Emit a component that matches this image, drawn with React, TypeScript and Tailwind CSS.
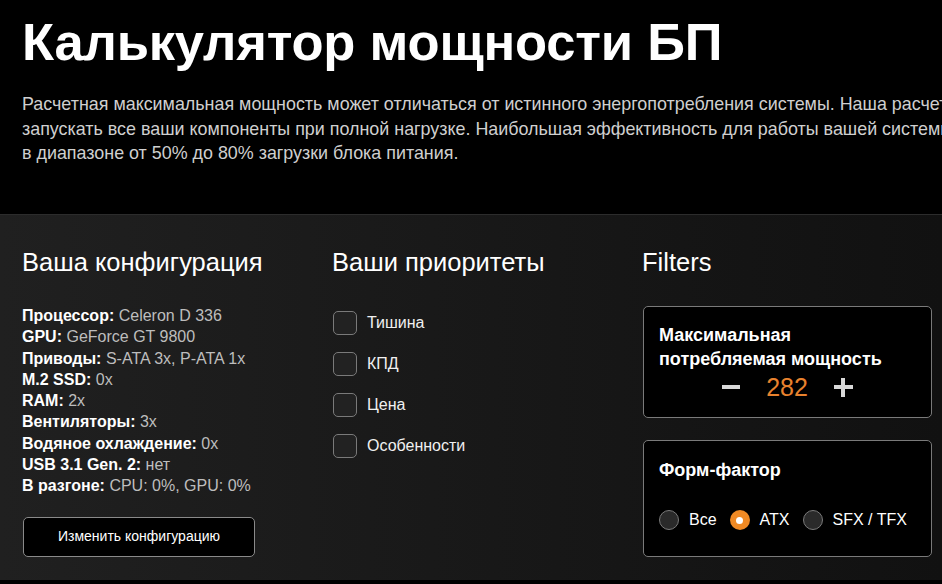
import { useState } from "react";

const config: [string, string][] = [
  ["Процессор:", "Celeron D 336"],
  ["GPU:", "GeForce GT 9800"],
  ["Приводы:", "S-ATA 3x, P-ATA 1x"],
  ["M.2 SSD:", "0x"],
  ["RAM:", "2x"],
  ["Вентиляторы:", "3x"],
  ["Водяное охлаждение:", "0x"],
  ["USB 3.1 Gen. 2:", "нет"],
  ["В разгоне:", "CPU: 0%, GPU: 0%"],
];

const priorities = ["Тишина", "КПД", "Цена", "Особенности"];
const forms = ["Все", "ATX", "SFX / TFX"];

export default function App() {
  const [watts, setWatts] = useState(282);
  const [form, setForm] = useState("ATX");
  const [checked, setChecked] = useState<string[]>([]);

  function toggle(p: string) {
    setChecked((c) => (c.includes(p) ? c.filter((x) => x !== p) : [...c, p]));
  }

  return (
    <div className="w-[942px] h-[584px] overflow-hidden bg-black text-white font-['Liberation_Sans',Arial,sans-serif]">
      <header className="h-[214px] px-[22px] pt-[12px] overflow-hidden">
        <h1 className="text-[52.5px] font-bold leading-[60px] tracking-[-0.2px] whitespace-nowrap">
          Калькулятор мощности БП
        </h1>
        <p className="mt-[20px] text-[17.9px] leading-[24.5px] text-[#cfcfcf] whitespace-nowrap">
          Расчетная максимальная мощность может отличаться от истинного энергопотребления системы. Наша расчетная мощность позволит
          <br />
          запускать все ваши компоненты при полной нагрузке. Наибольшая эффективность для работы вашей системы достигается
          <br />
          в диапазоне от 50% до 80% загрузки блока питания.
        </p>
      </header>

      <section className="h-[366px] border-t border-[#2c2c2c] bg-gradient-to-r from-[#202020] to-[#111111] flex pl-[22px] pt-[31px]">
        <div className="w-[310px] shrink-0">
          <h2 className="text-[25.5px] leading-[32px] whitespace-nowrap">Ваша конфигурация</h2>
          <ul className="mt-[27px] text-[16px] leading-[21.3px] whitespace-nowrap">
            {config.map(([k, v]) => (
              <li key={k}>
                <b className="font-bold text-white">{k}</b>{" "}
                <span className="text-[#bdbdbd]">{v}</span>
              </li>
            ))}
          </ul>
          <button className="mt-[20px] ml-px w-[232px] h-[40px] rounded-[5px] border border-[#8a8a8a] bg-black text-[14px] text-white">
            Изменить конфигурацию
          </button>
        </div>

        <div className="w-[310px] shrink-0">
          <h2 className="text-[25.5px] leading-[32px] whitespace-nowrap">Ваши приоритеты</h2>
          <div className="mt-[33px] flex flex-col gap-[17px]">
            {priorities.map((p) => (
              <label key={p} className="flex items-center gap-[10px] cursor-pointer" onClick={() => toggle(p)}>
                <span className="ml-px w-[24px] h-[24px] rounded-[5px] border border-[#7a7a7a] bg-[#222] flex items-center justify-center">
                  {checked.includes(p) && <span className="w-[12px] h-[12px] rounded-[2px] bg-[#f08a24]" />}
                </span>
                <span className="text-[16px] text-[#f0f0f0]">{p}</span>
              </label>
            ))}
          </div>
        </div>

        <div className="w-[290px] shrink-0">
          <h2 className="text-[25.5px] leading-[32px]">Filters</h2>
          <div className="mt-[28px] ml-px h-[112px] rounded-[5px] border border-[#7a7a7a] bg-black px-[15px] pt-[16px]">
            <div className="text-[18px] font-bold leading-[24px] whitespace-nowrap">
              Максимальная
              <br />
              потребляемая мощность
            </div>
            <div className="flex items-center justify-center gap-[26px] mt-[2px]">
              <button onClick={() => setWatts(watts - 1)} className="w-[18px] h-[4px] bg-[#d9d9d9]" />
              <span className="text-[25px] leading-[28px] text-[#e8822e]">{watts}</span>
              <button onClick={() => setWatts(watts + 1)} className="relative w-[19px] h-[19px]">
                <span className="absolute left-0 top-[7.5px] w-[19px] h-[4px] bg-[#d9d9d9]" />
                <span className="absolute top-0 left-[7.5px] w-[4px] h-[19px] bg-[#d9d9d9]" />
              </button>
            </div>
          </div>

          <div className="mt-[22px] ml-px h-[117px] rounded-[5px] border border-[#7a7a7a] bg-black px-[15px] pt-[17px]">
            <div className="text-[18px] font-bold leading-[24px]">Форм-фактор</div>
            <div className="mt-[26px] flex items-center">
              {forms.map((f) => (
                <label key={f} className="flex items-center mr-[13px] cursor-pointer whitespace-nowrap" onClick={() => setForm(f)}>
                  {form === f ? (
                    <span className="w-[20px] h-[20px] rounded-full bg-[#f08a24] flex items-center justify-center">
                      <span className="w-[7px] h-[7px] rounded-full bg-white" />
                    </span>
                  ) : (
                    <span className="w-[20px] h-[20px] rounded-full border border-[#7a7a7a] bg-[#2a2a2a]" />
                  )}
                  <span className="ml-[10px] text-[16px]">{f}</span>
                </label>
              ))}
            </div>
          </div>
        </div>
      </section>
    </div>
  );
}
